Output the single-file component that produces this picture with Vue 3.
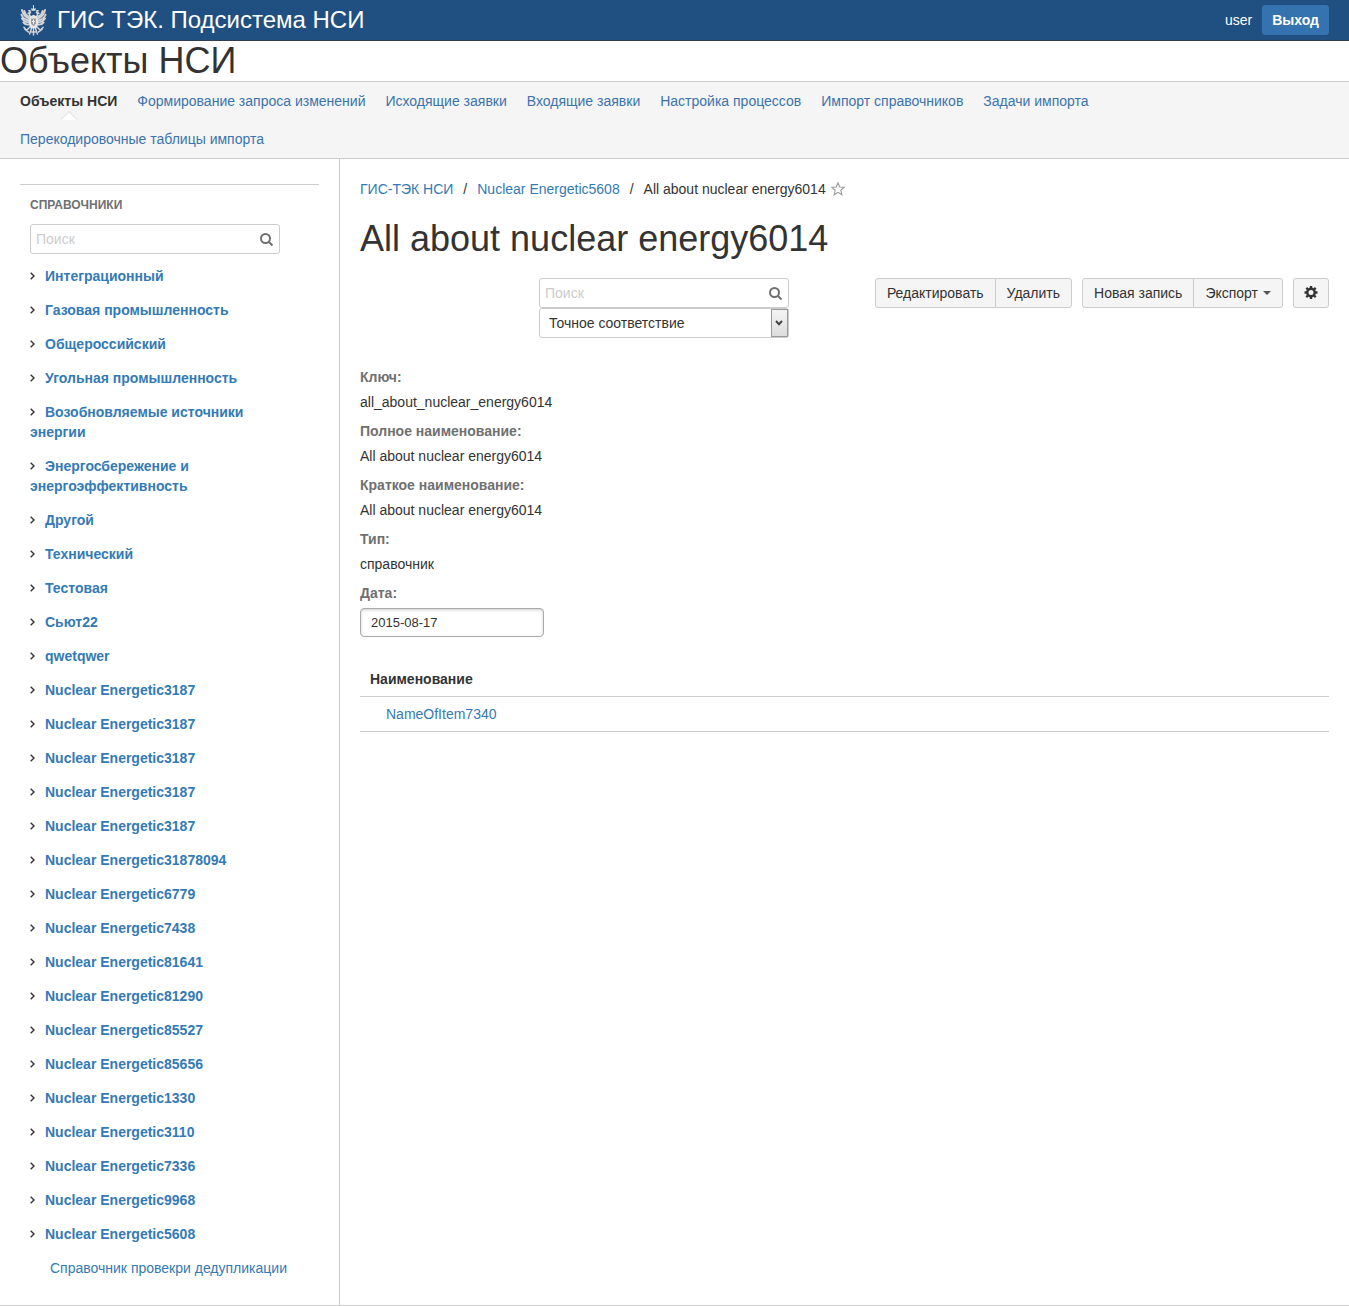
<script setup>
import { ref } from 'vue'

const tabs = [
  'Объекты НСИ',
  'Формирование запроса изменений',
  'Исходящие заявки',
  'Входящие заявки',
  'Настройка процессов',
  'Импорт справочников',
  'Задачи импорта',
  'Перекодировочные таблицы импорта',
]

const groups = [
  'Интеграционный',
  'Газовая промышленность',
  'Общероссийский',
  'Угольная промышленность',
  'Возобновляемые источники энергии',
  'Энергосбережение и энергоэффективность',
  'Другой',
  'Технический',
  'Тестовая',
  'Сьют22',
  'qwetqwer',
  'Nuclear Energetic3187',
  'Nuclear Energetic3187',
  'Nuclear Energetic3187',
  'Nuclear Energetic3187',
  'Nuclear Energetic3187',
  'Nuclear Energetic31878094',
  'Nuclear Energetic6779',
  'Nuclear Energetic7438',
  'Nuclear Energetic81641',
  'Nuclear Energetic81290',
  'Nuclear Energetic85527',
  'Nuclear Energetic85656',
  'Nuclear Energetic1330',
  'Nuclear Energetic3110',
  'Nuclear Energetic7336',
  'Nuclear Energetic9968',
  'Nuclear Energetic5608',
]

const fields = [
  { label: 'Ключ:', value: 'all_about_nuclear_energy6014' },
  { label: 'Полное наименование:', value: 'All about nuclear energy6014' },
  { label: 'Краткое наименование:', value: 'All about nuclear energy6014' },
  { label: 'Тип:', value: 'справочник' },
]

const treeQuery = ref('')
const query = ref('')
const matchMode = ref('exact')
const date = ref('2015-08-17')
</script>

<template>
  <div class="page">
    <header class="topbar">
      <a class="brand" href="#">
        <svg class="emblem" viewBox="0 0 28 32" aria-hidden="true">
          <g fill="none" stroke="#d4d4d8" stroke-linecap="round">
            <path stroke-width="2" d="M10 14C6 13 3 10 2 5M10 16C6 15.500 3 14 1.500 10M10 18C7 18 4 17 2 14M10 20C8 20.500 5 20 3.500 18M9 12C7 11 5 9 4.500 6" />
            <path stroke-width="2" d="M18 14C22 13 25 10 26 5M18 16C22 15.500 25 14 26.500 10M18 18C21 18 24 17 26 14M18 20C20 20.500 23 20 24.500 18M19 12C21 11 23 9 23.500 6" />
            <path stroke-width="1.700" d="M12 13C9 11 9 8 11.500 7.500L8.500 8.500M16 13C19 11 19 8 16.500 7.500L19.500 8.500" />
            <path stroke-width="1.500" d="M11 22L7 26M17 22L21 26M5 25L9 28M23 25L19 28M4 23L7 26M24 23L21 26" />
            <path stroke-width="1.500" d="M12 24L10 30M14 24V31M16 24L18 30M12 28H16" />
          </g>
          <path fill="#e8e8ea" d="M10 12L14 10L18 12L19 19L17 24H11L9 19Z" />
          <path fill="#94979e" d="M11.500 14H16.500V19L14 22L11.500 19Z" />
          <path fill="#f5f5f5" d="M13.500 15H14.500V20H13.500ZM12.500 16.500H15.500V17.500H12.500Z" />
          <path fill="#e2e2e4" d="M12 6L11.500 3L13 4L14 1L15 4L16.500 3L16 6ZM9 7L8.500 5H11V7ZM17 7V5H19.500L19 7ZM13.500 0H14.500V3H13.500Z" />
        </svg>
        <span>ГИС ТЭК. Подсистема НСИ</span>
      </a>
      <div class="account">
        <a class="user" href="#">user</a>
        <button class="logout" type="button">Выход</button>
      </div>
    </header>

    <h1>Объекты НСИ</h1>

    <nav class="tabs">
      <a v-for="(tab, i) in tabs" :key="tab" href="#" :class="{ active: i === 0 }">
        {{ tab }}
        <svg v-if="i === 0" class="pointer" width="16" height="9" viewBox="0 0 16 9" aria-hidden="true">
          <path d="M0 9L8 1L16 9Z" fill="#fff" />
          <path d="M0 8.500L8 .7L16 8.500" fill="none" stroke="#ddd" />
        </svg>
      </a>
    </nav>

    <div class="body">
      <aside class="sidebar">
        <div class="tree">
          <h2>СПРАВОЧНИКИ</h2>
          <div class="search">
            <input v-model="treeQuery" type="text" placeholder="Поиск" aria-label="Поиск справочника" />
            <svg width="14" height="14" viewBox="0 0 14 14" aria-hidden="true">
              <circle cx="5.500" cy="5.500" r="4.500" />
              <path d="M9 9L12.500 12.500" />
            </svg>
          </div>
          <ul>
            <li v-for="(name, i) in groups" :key="i">
              <svg class="chevron" width="5" height="8" viewBox="0 0 5 8" aria-hidden="true">
                <path d="M.7 .7L4 4L.7 7.300" />
              </svg>
              <a href="#">{{ name }}</a>
            </li>
            <li class="leaf"><a href="#">Справочник провекри дедупликации</a></li>
          </ul>
        </div>
      </aside>

      <main class="content">
        <div class="crumbs">
          <a href="#">ГИС-ТЭК НСИ</a>
          <span class="slash">/</span>
          <a href="#">Nuclear Energetic5608</a>
          <span class="slash">/</span>
          <span>All about nuclear energy6014</span>
          <svg class="star" width="14" height="14" viewBox="0 0 13 13" aria-hidden="true">
            <path d="M6.500 .8L8.100 4.600L12.300 4.900L9.100 7.700L10.100 11.900L6.500 9.600L2.900 11.900L3.900 7.700L.7 4.900L4.900 4.600Z" />
          </svg>
        </div>
        <h1>All about nuclear energy6014</h1>

        <div class="toolbar">
          <form class="filter" @submit.prevent>
            <div class="search">
              <input v-model="query" type="text" placeholder="Поиск" aria-label="Поиск записи" />
              <svg width="14" height="14" viewBox="0 0 14 14" aria-hidden="true">
                <circle cx="5.500" cy="5.500" r="4.500" />
                <path d="M9 9L12.500 12.500" />
              </svg>
            </div>
            <div class="select">
              <select v-model="matchMode" aria-label="Режим поиска">
                <option value="exact">Точное соответствие</option>
              </select>
              <span class="arrow" aria-hidden="true">
                <svg width="8" height="6" viewBox="0 0 8 6"><path d="M1 1L4 4.200L7 1" /></svg>
              </span>
            </div>
          </form>
          <div class="actions">
            <div class="buttons">
              <button type="button">Редактировать</button>
              <button type="button">Удалить</button>
            </div>
            <div class="buttons">
              <button type="button">Новая запись</button>
              <button type="button">Экспорт<span class="caret"></span></button>
            </div>
            <div class="buttons">
              <button type="button" aria-label="Настройки">
                <svg width="14" height="14" viewBox="0 0 14 14" aria-hidden="true">
                  <circle cx="7" cy="6.500" r="3.700" fill="none" stroke="#333" stroke-width="2.400" />
                  <path d="M7 0V2.500M7 10.500V13M.5 6.500H3M11 6.500H13.500M2.300 1.800L4 3.500M10 9.500L11.700 11.200M2.300 11.200L4 9.500M10 3.500L11.700 1.800" stroke="#333" stroke-width="2.400" />
                </svg>
              </button>
            </div>
          </div>
        </div>

        <dl class="fields">
          <template v-for="field in fields" :key="field.label">
            <dt>{{ field.label }}</dt>
            <dd>{{ field.value }}</dd>
          </template>
        </dl>
        <div class="date">
          <label for="date">Дата:</label>
          <input id="date" v-model="date" type="text" />
        </div>

        <table>
          <thead>
            <tr><th scope="col">Наименование</th></tr>
          </thead>
          <tbody>
            <tr><td><a href="#">NameOfItem7340</a></td></tr>
          </tbody>
        </table>
      </main>
    </div>
  </div>
</template>

<style>
body {
  margin: 0;
  background: #fff;
}
</style>

<style scoped>
.page,
.page * {
  box-sizing: border-box;
}

.page {
  color: #333;
  font: 14px/20px "Liberation Sans", Arial, sans-serif;
}

button,
input,
select {
  font: inherit;
  color: inherit;
}

button {
  cursor: pointer;
}

a {
  color: #337ab7;
  text-decoration: none;
}

h1 {
  margin: 0;
  font-size: 36px;
  font-weight: 400;
  line-height: 40px;
}

.topbar {
  display: flex;
  align-items: center;
  justify-content: space-between;
  height: 41px;
  padding: 0 20px;
  border-bottom: 1px solid #2e3d54;
  background: #205081;
}

.brand {
  display: flex;
  align-items: center;
  gap: 10px;
  color: #fff;
  font-size: 24px;
}

.emblem {
  width: 27px;
  height: 31px;
}

.account {
  display: flex;
  align-items: center;
  gap: 10px;
}

.user {
  color: #fff;
}

.logout {
  height: 30px;
  padding: 0 10px;
  border: 0;
  border-radius: 3px;
  background: #3572b0;
  color: #fff;
  font-weight: 700;
}

.tabs {
  display: flex;
  flex-wrap: wrap;
  padding: 0 200px 0 10px;
  border: solid #ccc;
  border-width: 1px 0;
  background: #f5f5f5;
}

.tabs a {
  position: relative;
  padding: 9px 10px;
  color: #3b73af;
}

.tabs .active {
  color: #333;
  font-weight: 700;
}

.pointer {
  position: absolute;
  left: 50%;
  bottom: 0;
  margin-left: -8px;
}

.body {
  display: flex;
  border-bottom: 1px solid #ccc;
}

.sidebar {
  flex: 0 0 340px;
  padding: 25px 20px 27px;
  border-right: 1px solid #ccc;
}

.tree {
  padding: 10px 10px 0;
  border-top: 1px solid #ccc;
}

h2 {
  margin: 0 0 9px;
  color: #707070;
  font-size: 12px;
  line-height: 20px;
}

.search {
  position: relative;
  width: 250px;
}

.search input {
  display: block;
  width: 100%;
  height: 30px;
  padding: 0 28px 0 5px;
  border: 1px solid #ccc;
  border-radius: 3px;
  background: #fff;
}

.search input::placeholder {
  color: #ccc;
  opacity: 1;
}

.search svg {
  position: absolute;
  top: 9px;
  right: 6px;
  fill: none;
  stroke: #707070;
  stroke-width: 2;
}

ul {
  display: flex;
  flex-direction: column;
  gap: 14px;
  margin: 12px 0 0;
  padding: 0;
  list-style: none;
}

li {
  padding-right: 20px;
  font-weight: 700;
}

.leaf {
  padding: 0 0 0 20px;
  font-weight: 400;
  white-space: nowrap;
}

.chevron {
  margin-right: 6px;
  vertical-align: 1px;
  fill: none;
  stroke: #333;
  stroke-width: 1.4;
}

.chevron + a {
  margin-left: 4px;
}

.content {
  flex: 1;
  min-width: 0;
  padding: 20px;
}

.crumbs {
  display: flex;
  align-items: center;
  margin-bottom: 20px;
}

.slash {
  padding: 0 10px;
}

.star {
  margin-left: 5px;
  fill: none;
  stroke: #999;
}

.toolbar {
  display: grid;
  grid-template-columns: 25fr 250px 12fr auto;
  align-items: start;
  margin-top: 19px;
}

.filter {
  grid-column: 2;
}

.select {
  position: relative;
}

.select select {
  display: block;
  width: 100%;
  height: 30px;
  padding: 0 24px 0 9px;
  border: 1px solid #ccc;
  border-radius: 3px;
  background: #fff;
  appearance: none;
}

.arrow {
  position: absolute;
  top: 1px;
  right: 1px;
  display: flex;
  align-items: center;
  justify-content: center;
  width: 17px;
  height: 28px;
  border: 1px solid #999;
  background: linear-gradient(#f4f4f4, #ddd);
  pointer-events: none;
}

.arrow path {
  fill: none;
  stroke: #444;
  stroke-width: 2;
}

.actions {
  display: flex;
  grid-column: 4;
  gap: 10px;
}

.buttons {
  display: flex;
}

.buttons button {
  display: flex;
  align-items: center;
  height: 30px;
  padding: 0 11px;
  border: 1px solid #ccc;
  background: #f5f5f5;
}

.buttons button:first-child {
  border-radius: 3px 0 0 3px;
}

.buttons button:last-child {
  border-radius: 0 3px 3px 0;
}

.buttons button:only-child {
  padding: 0 10px;
  border-radius: 3px;
}

.buttons button + button {
  margin-left: -1px;
}

.caret {
  margin-left: 5px;
  border: 4px solid transparent;
  border-top-color: #555;
  border-bottom: 0;
}

.fields {
  margin: 29px 0 0;
}

dt,
label {
  display: block;
  margin-bottom: 5px;
  color: #707070;
  font-weight: 700;
}

dd {
  margin: 0 0 9px;
}

.date input {
  display: block;
  width: 184px;
  height: 29px;
  padding: 0 10px;
  border: 1px solid #aaa;
  border-radius: 4px;
  box-shadow: inset 0 1px 3px #ccc;
  font-size: 13px;
}

table {
  width: 100%;
  margin-top: 25px;
  border-collapse: collapse;
  text-align: left;
}

th,
td {
  padding: 7px 10px;
  border-bottom: 1px solid #ccc;
}

td {
  padding-left: 26px;
}
</style>
